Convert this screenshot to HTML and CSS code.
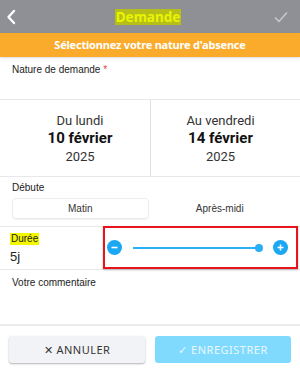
FILE: index.html
```html
<!DOCTYPE html>
<html lang="fr">
<head>
	<meta charset="UTF-8">
	<title>Demande</title>
	<link rel="stylesheet" href="styles.css">
</head>
<body>
	<div class="topbar">
		<a class="back" href="#">
			<svg width="10" height="16" viewBox="0 0 10 16"><path d="M8 2 L2.5 8 L8 14" fill="none" stroke="#fff" stroke-width="2.4" stroke-linecap="round" stroke-linejoin="round"/></svg>
		</a>
		<span class="title">Demande</span>
		<a class="ok" href="#">
			<svg width="14" height="12" viewBox="0 0 14 12"><path d="M1 6.5 L5 10.5 L13 1.5" fill="none" stroke="#c9cbcf" stroke-width="1.4"/></svg>
		</a>
	</div>
	<div class="banner">Sélectionnez votre nature d'absence</div>

	<div class="nature">
		<span class="label">Nature de demande <em>*</em></span>
	</div>

	<div class="dates">
		<div class="date">
			<div class="day">Du lundi</div>
			<div class="dm">10 février</div>
			<div class="year">2025</div>
		</div>
		<div class="date">
			<div class="day">Au vendredi</div>
			<div class="dm">14 février</div>
			<div class="year">2025</div>
		</div>
	</div>

	<div class="start">
		<span class="label">Débute</span>
		<div class="segment">
			<span class="seg on">Matin</span>
			<span class="seg">Après-midi</span>
		</div>
	</div>

	<div class="duration">
		<div class="dur-val">
			<span class="label mark">Durée</span>
			<span class="days">5j</span>
		</div>
		<div class="slider">
			<span class="round">
				<svg width="15" height="15" viewBox="0 0 15 15"><circle cx="7.5" cy="7.5" r="7.5" fill="#1ba8f3"/><path d="M4.5 7.5 H10.5" stroke="#fff" stroke-width="1.6"/></svg>
			</span>
			<div class="track"><span class="thumb"></span></div>
			<span class="round">
				<svg width="15" height="15" viewBox="0 0 15 15"><circle cx="7.5" cy="7.5" r="7.5" fill="#1ba8f3"/><path d="M4.5 7.5 H10.5 M7.5 4.5 V10.5" stroke="#fff" stroke-width="1.6"/></svg>
			</span>
		</div>
	</div>

	<div class="comment">
		<span class="label">Votre commentaire</span>
	</div>

	<div class="actions">
		<button class="btn cancel">&#x2715; ANNULER</button>
		<button class="btn save">&#x2713; ENREGISTRER</button>
	</div>
</body>
</html>
```

FILE: styles.css
```css
*{
	margin: 0;
	padding: 0;
	box-sizing: border-box;
}
body{
	width: 300px;
	height: 382px;
	background: #fff;
	font-family: "Liberation Sans", Arial, sans-serif;
	color: #222;
	overflow: hidden;
}
.topbar{
	height: 33px;
	background: #8e9096;
	display: flex;
	align-items: center;
	justify-content: space-between;
	padding: 0 10px 0 6px;
}
.back, .ok{
	display: flex;
	width: 16px;
}
.title{
	font-family: "Noto Sans", sans-serif;
	font-weight: bold;
	font-size: 13.5px;
	line-height: 16px;
	color: #e9f400;
	background: #b6bf1a;
	padding: 0 1px;
}
.banner{
	height: 24px;
	background: #fbab2b;
	color: #fff;
	font-family: "Noto Sans", sans-serif;
	font-weight: bold;
	font-size: 11px;
	letter-spacing: -0.2px;
	line-height: 24px;
	text-align: center;
	box-shadow: 0 1px 2px rgba(0,0,0,0.15);
	position: relative;
}
.label{
	display: block;
	font-size: 10px;
	line-height: 12px;
	color: #222;
}
.label em{
	font-style: normal;
	color: #e53935;
}
.nature{
	height: 43px;
	padding: 7px 12px;
	border-bottom: 1px solid #e8e8e8;
}
.dates{
	display: grid;
	grid-template-columns: 1fr 1fr;
	height: 77px;
	padding: 0 10px;
	border-bottom: 1px solid #e8e8e8;
}
.date{
	text-align: center;
	font-family: Roboto, sans-serif;
	padding-top: 12px;
}
.date + .date{
	border-left: 1.5px solid #e0e0e0;
}
.day{
	font-size: 13px;
	line-height: 17px;
	color: #333;
}
.dm{
	font-size: 15px;
	font-weight: bold;
	line-height: 19px;
	color: #111;
}
.year{
	font-size: 13px;
	line-height: 18px;
	color: #333;
}
.start{
	height: 50px;
	padding: 5px 12px 0 12px;
	border-bottom: 1px solid #e8e8e8;
}
.segment{
	display: grid;
	grid-template-columns: 1fr 1fr;
	margin-top: 4px;
	gap: 3px;
}
.seg{
	height: 21px;
	line-height: 21px;
	text-align: center;
	font-size: 10px;
	color: #333;
	border-radius: 4px;
}
.seg.on{
	border: 1px solid #ececec;
	box-shadow: 0 1px 1px rgba(0,0,0,0.06);
	line-height: 19px;
}
.duration{
	display: flex;
	height: 43px;
	border-bottom: 1px solid #e8e8e8;
}
.dur-val{
	width: 103px;
	padding: 6px 10px 0 10px;
	display: flex;
	flex-direction: column;
	align-items: flex-start;
}
.mark{
	background: #f3f700;
	padding: 0 1px;
}
.days{
	font-size: 13px;
	margin-top: 4px;
	color: #222;
}
.slider{
	flex: 1;
	border: 2px solid #e8141c;
	margin: -1px 2px 0 0;
	display: flex;
	align-items: center;
	padding: 0 8px 0 2px;
	box-shadow: 0 1px 2px rgba(0,0,0,0.25);
}
.round{
	display: flex;
}
.track{
	flex: 1;
	height: 2px;
	background: #29b0f5;
	margin: 0 14px 0 11px;
	position: relative;
}
.thumb{
	position: absolute;
	right: -4px;
	top: -3px;
	width: 8px;
	height: 8px;
	border-radius: 50%;
	background: #29b0f5;
}
.comment{
	height: 56px;
	padding: 7px 12px;
	border-bottom: 2px solid #ececec;
}
.actions{
	display: flex;
	gap: 10px;
	padding: 10px 9px;
}
.btn{
	flex: 1;
	height: 27px;
	border: none;
	border-radius: 3px;
	font-family: "Noto Sans", sans-serif;
	font-size: 11px;
	letter-spacing: 0.5px;
}
.cancel{
	background: #f2f3f6;
	color: #333;
	box-shadow: 0 1px 2px rgba(0,0,0,0.3);
}
.save{
	background: #80dafd;
	color: #e9f8ff;
}
```
